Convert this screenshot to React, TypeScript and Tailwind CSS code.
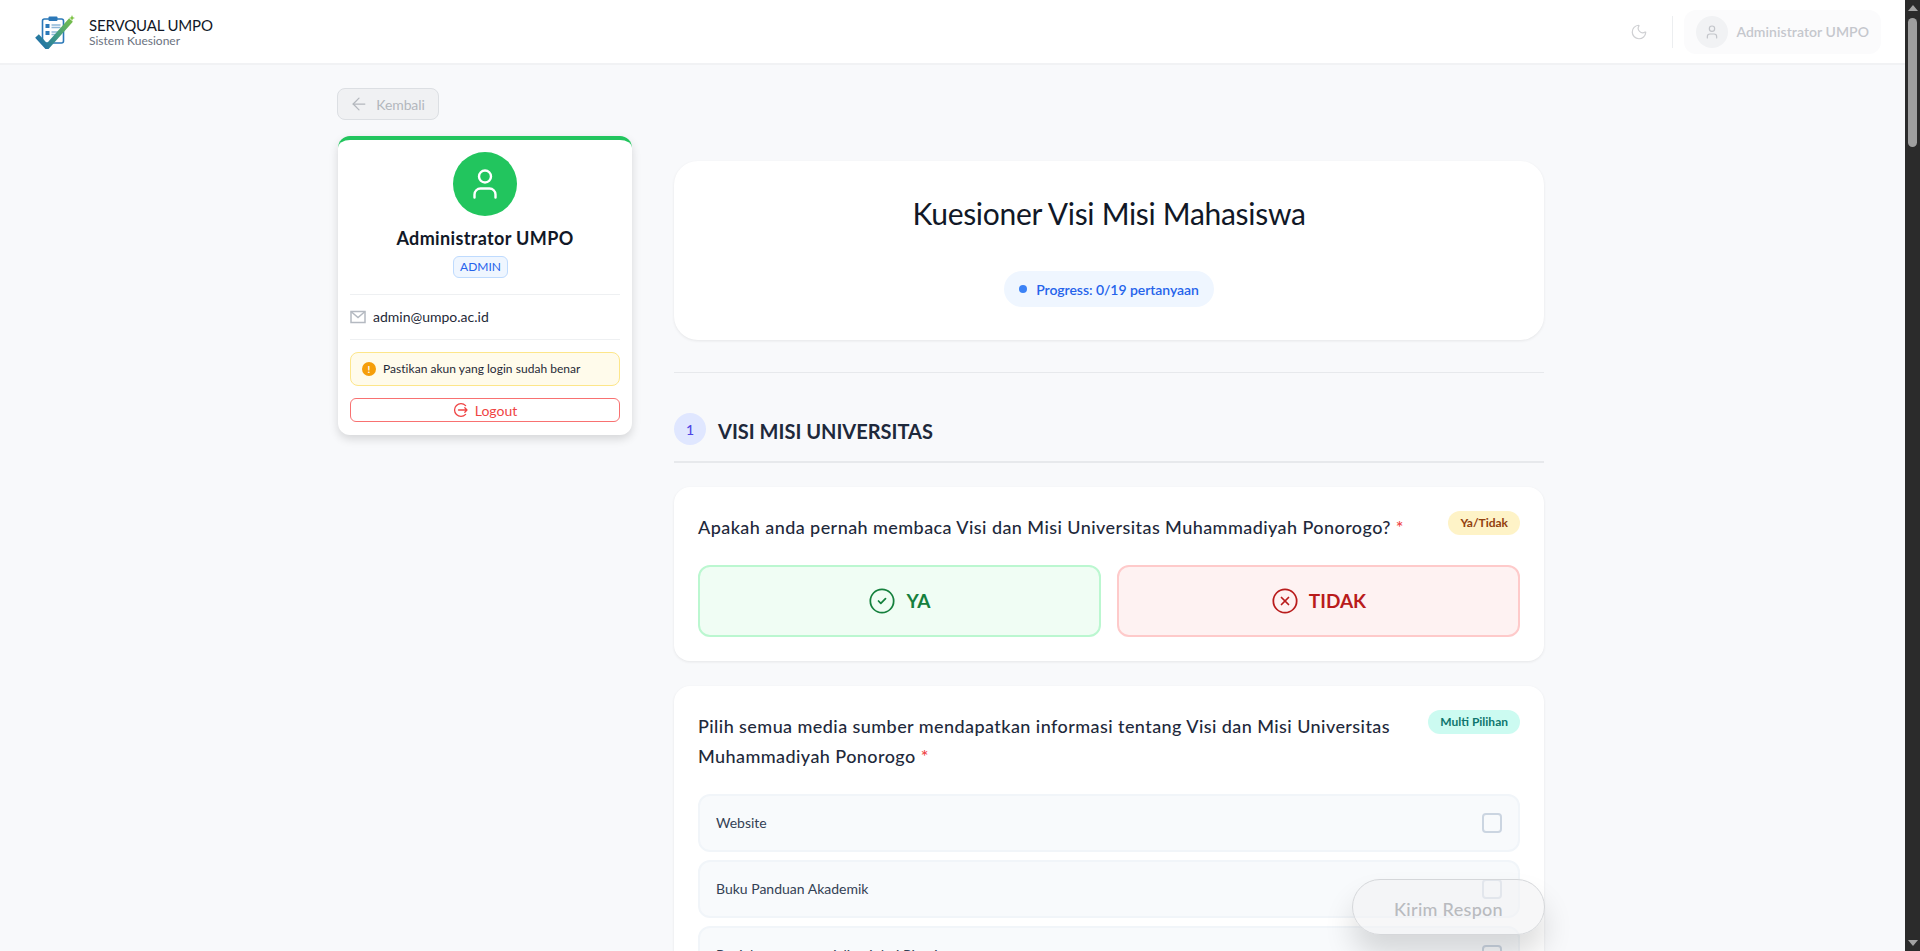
import { ArrowLeft, CircleCheck, CircleX, Moon, User } from "lucide-react";

const options = [
  "Website",
  "Buku Panduan Akademik",
  "Penjelasan saat sosialisasi dari Pimpinan",
];

function Logo() {
  return (
    <svg viewBox="0 0 40 34" className="h-[34px] w-[40px]" fill="none">
      <defs>
        <linearGradient id="tick" x1="3" y1="30" x2="38" y2="3" gradientUnits="userSpaceOnUse">
          <stop offset="0" stopColor="#1f6fa8" />
          <stop offset="0.45" stopColor="#3f9a86" />
          <stop offset="1" stopColor="#7cc243" />
        </linearGradient>
      </defs>
      <rect x="7.5" y="4" width="21" height="24" rx="2" fill="#ffffff" stroke="#2b78b8" strokeWidth="1.6" />
      <rect x="13.5" y="1.5" width="9" height="4.5" rx="1" fill="#2b78b8" />
      <rect x="10.5" y="9" width="4" height="4" fill="#2b78b8" />
      <rect x="10.5" y="16" width="4" height="4" fill="#2b78b8" />
      <path d="M16.5 10h9M16.5 12.5h9M16.5 17h9M16.5 19.5h6" stroke="#8fb8d8" strokeWidth="1.3" />
      <path d="M2 21l10 11L36 5" stroke="url(#tick)" strokeWidth="5" strokeLinejoin="miter" />
      <path d="M37 0l.9 2.2 2.1.8-2.1.8L37 6l-.9-2.2-2.1-.8 2.1-.8z" fill="#7cc243" />
    </svg>
  );
}

function LogoutIcon() {
  return (
    <svg viewBox="0 0 16 16" className="h-4 w-4" fill="none" stroke="currentColor" strokeWidth="1.3" strokeLinecap="round" strokeLinejoin="round">
      <path d="M12.6 3.6A6.4 6.4 0 1 0 12.6 12.4" />
      <path d="M5.5 8H14M11.8 5.8 14 8l-2.2 2.2" />
    </svg>
  );
}

function MailIcon() {
  return (
    <svg viewBox="0 0 16 14" className="h-[14px] w-4 text-[#b4b9c1]" fill="none" stroke="currentColor" strokeWidth="1.5">
      <rect x="1" y="1.5" width="14" height="11" />
      <path d="M1 1.5l7 6 7-6" />
    </svg>
  );
}

function Header() {
  return (
    <header className="flex h-[65px] shrink-0 items-center justify-between border-b-2 border-[#f1f2f4] bg-white pl-[35px] pr-6">
      <div className="flex items-center gap-[14px]">
        <Logo />
        <div className="flex flex-col">
          <span className="text-[15px] leading-[18px] tracking-[-0.15px] text-[#111827]">SERVQUAL UMPO</span>
          <span className="text-[12px] leading-[14px] text-[#6b7280]">Sistem Kuesioner</span>
        </div>
      </div>
      <div className="flex items-center">
        <Moon className="h-[18px] w-[18px] text-[#cfd0d3]" strokeWidth={1.6} />
        <div className="ml-6 mr-[11px] h-8 w-px bg-[#eceef0]" />
        <div className="flex h-11 items-center gap-2 rounded-xl bg-[#fbfbfc] px-3">
          <div className="flex h-8 w-8 items-center justify-center rounded-full bg-[#f1f2f4]">
            <User className="h-4 w-4 text-[#c3c5ca]" strokeWidth={1.8} />
          </div>
          <span className="text-[14px] font-semibold tracking-[0.05px] text-[#c5c7cd]">Administrator UMPO</span>
        </div>
      </div>
    </header>
  );
}

function Sidebar() {
  return (
    <aside className="w-[295px] shrink-0">
      <button className="mb-4 flex h-8 w-[102px] items-center justify-center gap-[7px] rounded-lg border border-[#dcdfe3] bg-[#f0f1f3] pr-[2px] text-[14px] tracking-[-0.1px] text-[#b3b7bd]">
        <ArrowLeft className="h-5 w-5" strokeWidth={1.5} />
        Kembali
      </button>
      <div className="ml-px flex flex-col rounded-xl border-t-4 border-[#22c55e] bg-white px-3 pb-[13px] pt-3 shadow-[0_4px_10px_rgba(0,0,0,0.14)]">
        <div className="mx-auto flex h-16 w-16 items-center justify-center rounded-full bg-[#22c55e]">
          <User className="h-9 w-9 text-white" strokeWidth={1.6} />
        </div>
        <div className="mt-2 text-center text-[18px] font-bold leading-7 tracking-[0.35px] text-[#111827]">Administrator UMPO</div>
        <span className="ml-[103px] mt-1 flex h-[22px] w-[55px] items-center justify-center rounded-md border border-[#bfdbfe] bg-[#eff6ff] text-[12px] text-[#2563eb]">
          ADMIN
        </span>
        <div className="mt-4 flex h-[46px] items-center gap-[7px] border-y border-[#eef0f2] pb-px">
          <MailIcon />
          <span className="text-[14px] text-[#1f2937]">admin@umpo.ac.id</span>
        </div>
        <div className="mt-3 flex h-[34px] items-center gap-[7px] rounded-lg border border-[#fde68a] bg-[#fffbeb] px-[11px]">
          <span className="flex h-[14px] w-[14px] items-center justify-center rounded-full bg-[#f59e0b] text-[10px] font-bold leading-none text-white">!</span>
          <span className="text-[12px] tracking-[0.03px] text-[#1f2937]">Pastikan akun yang login sudah benar</span>
        </div>
        <button className="mt-3 flex h-6 items-center justify-center gap-1.5 rounded-md border border-[#f87171] bg-white text-[14px] text-[#ef4444]">
          <LogoutIcon />
          Logout
        </button>
      </div>
    </aside>
  );
}

function Question({ badge, badgeClass, children }: { badge: string; badgeClass: string; children: React.ReactNode }) {
  return (
    <div className="flex justify-between gap-6">
      <p className="pt-px text-[18px] font-medium leading-[30px] tracking-[0.43px] text-[#1e293b]">
        {children} <span className="text-[#ef4444]">*</span>
      </p>
      <span className={`h-6 shrink-0 whitespace-nowrap rounded-full px-3 text-[12px] font-bold leading-6 ${badgeClass}`}>{badge}</span>
    </div>
  );
}

function Main() {
  return (
    <main className="ml-[42px] mt-[73px] w-[870px] shrink-0">
      <section className="flex h-[179px] flex-col items-center rounded-3xl bg-white shadow-[0_1px_3px_rgba(0,0,0,0.08)]">
        <h1 className="mt-[30px] text-[30px] leading-[44px] tracking-[-0.3px] text-[#111827]">Kuesioner Visi Misi Mahasiswa</h1>
        <div className="mt-[36px] flex h-9 items-center gap-[9px] rounded-full bg-[#eff6ff] px-[15px] text-[14px] font-semibold tracking-[-0.05px] text-[#2563eb]">
          <span className="h-2 w-2 rounded-full bg-[#3b82f6]" />
          Progress: 0/19 pertanyaan
        </div>
      </section>
      <div className="mt-8 h-px bg-[#e7e9ec]" />
      <div className="mt-10 flex h-[50px] items-start gap-3 border-b-2 border-[#e7e9ec]">
        <span className="flex h-8 w-8 items-center justify-center rounded-full bg-[#e0e7ff] text-[14px] font-medium text-[#4f46e5]">1</span>
        <h2 className="text-[20px] font-bold leading-9 text-[#1e293b]">VISI MISI UNIVERSITAS</h2>
      </div>
      <section className="mt-6 rounded-2xl bg-white p-6 shadow-[0_1px_3px_rgba(0,0,0,0.08)]">
        <Question badge="Ya/Tidak" badgeClass="bg-[#fef3c7] text-[#92400e]">
          Apakah anda pernah membaca Visi dan Misi Universitas Muhammadiyah Ponorogo?
        </Question>
        <div className="mt-[23px] grid grid-cols-2 gap-4">
          <button className="flex h-[72px] items-center justify-center gap-2.5 rounded-xl border-2 border-[#bbf7d0] bg-[#f0fdf4] text-[19px] font-bold text-[#15803d]">
            <CircleCheck className="h-7 w-7" strokeWidth={1.5} />
            YA
          </button>
          <button className="flex h-[72px] items-center justify-center gap-2.5 rounded-xl border-2 border-[#fecaca] bg-[#fef2f2] text-[19px] font-bold text-[#b91c1c]">
            <CircleX className="h-7 w-7" strokeWidth={1.5} />
            TIDAK
          </button>
        </div>
      </section>
      <section className="mt-[25px] rounded-2xl bg-white p-6 shadow-[0_1px_3px_rgba(0,0,0,0.08)]">
        <Question badge="Multi Pilihan" badgeClass="bg-[#ccfbf1] text-[#0f766e]">
          Pilih semua media sumber mendapatkan informasi tentang Visi dan Misi Universitas Muhammadiyah Ponorogo
        </Question>
        <div className="mt-[23px] flex flex-col gap-2">
          {options.map((label) => (
            <div key={label} className="flex h-[58px] items-center justify-between rounded-xl border-2 border-[#f1f5f9] bg-[#f8fafc] pl-4 pr-[16px]">
              <span className="pb-[2px] text-[14px] text-[#334155]">{label}</span>
              <span className="h-5 w-5 rounded border-2 border-[#cbd5e1]" />
            </div>
          ))}
        </div>
      </section>
    </main>
  );
}

function Scrollbar() {
  return (
    <div className="flex w-[15px] shrink-0 flex-col items-center bg-[#2b2b2b]">
      <div className="mt-[5px] h-0 w-0 border-x-[5px] border-b-[6px] border-x-transparent border-b-[#a3a3a3]" />
      <div className="mt-[7px] h-[129px] w-[9px] rounded-[5px] bg-[#9f9f9f]" />
      <div className="mb-[5px] mt-auto h-0 w-0 border-x-[5px] border-t-[6px] border-x-transparent border-t-[#a3a3a3]" />
    </div>
  );
}

export default function App() {
  return (
    <div className="relative flex h-[951px] overflow-hidden bg-[#f8f9fb] [font-family:Lato,sans-serif]">
      <div className="flex min-w-0 flex-1 flex-col">
        <Header />
        <div className="flex overflow-hidden pl-[337px] pt-[23px]">
          <Sidebar />
          <Main />
        </div>
      </div>
      <Scrollbar />
      <button className="absolute left-[1352px] top-[879px] h-[56px] w-[193px] rounded-full border border-[#d5d7da] bg-[#f1f2f4]/60 pl-[41px] pt-[5px] text-left text-[18px] font-medium tracking-[0.3px] text-[#b9bbbf] shadow-[0_20px_30px_rgba(0,0,0,0.14)]">
        Kirim Respon
      </button>
    </div>
  );
}
